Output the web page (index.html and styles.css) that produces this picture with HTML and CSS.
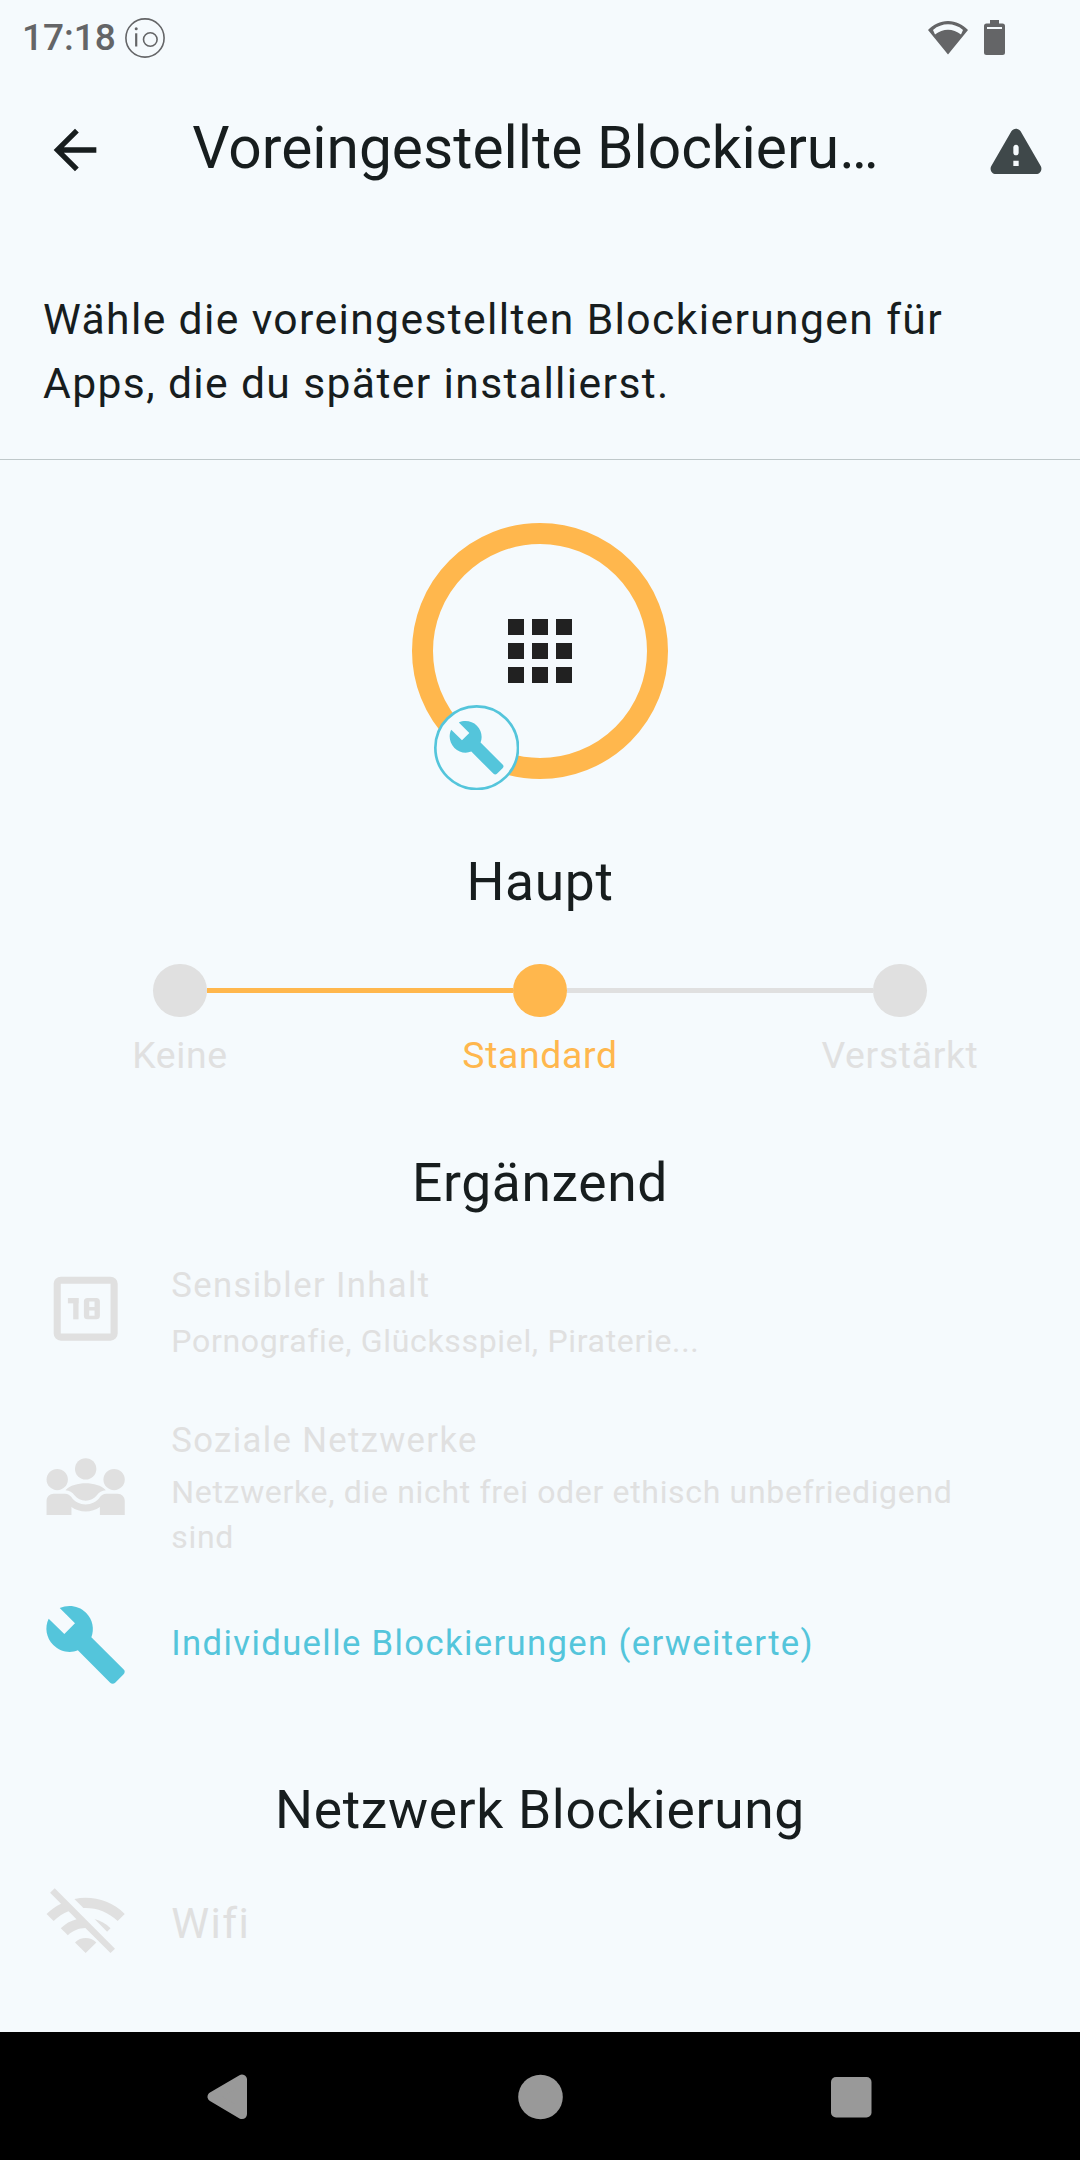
FILE: index.html
```
<!DOCTYPE html>
<html lang="de">
<head>
  <meta charset="UTF-8" />
  <title>Voreingestellte Blockierungen</title>
  <link rel="stylesheet" href="styles.css">
</head>
<body>
  <div class="status-bar">
    <span class="clock">17:18</span>
    <svg class="io" viewBox="0 0 40 40" fill="none" stroke="#646567" stroke-width="1.6">
      <circle cx="20" cy="20" r="19.1" />
      <circle cx="25.3" cy="21.5" r="6.8" />
      <path d="M11.2 15.3v13.2" stroke-width="2.2" />
      <circle cx="11.2" cy="10.8" r="1.5" fill="#646567" stroke="none" />
    </svg>
    <svg class="signal" viewBox="0 0 40 34" fill="#646567">
      <path d="M20 33.500 0 9C5.500 3.500 12 0 20 0s14.500 3.500 20 9zM7 13.500c8-6.500 18-6.500 26 0l2-4.600C26 1.500 14 1.500 5 8.900z" fill-rule="evenodd" />
    </svg>
    <svg class="battery" viewBox="0 0 21 35" fill="#646567">
      <path d="M6 0h9v3.500h3.500Q21 3.500 21 6v26.500Q21 35 18.500 35h-16Q0 35 0 32.500V6q0-2.500 2.500-2.500H6zM3 7v2h15V7z" fill-rule="evenodd" />
    </svg>
  </div>

  <header class="app-bar">
    <svg class="icon-bar" viewBox="0 0 24 24" fill="#171d1e"><path d="M20 11H7.830l5.590-5.590L12 4l-8 8 8 8 1.410-1.410L7.830 13H20v-2z" /></svg>
    <h1>Voreingestellte Blockieru…</h1>
    <svg class="icon-bar warning" viewBox="0 0 24 24" fill="#3f484a"><path d="M4.470 21h15.060c1.540 0 2.500-1.670 1.730-3L13.730 4.990c-.77-1.330-2.690-1.330-3.460 0L2.740 18c-.77 1.330.19 3 1.730 3zM12 14c-.55 0-1-.45-1-1v-2c0-.55.45-1 1-1s1 .45 1 1v2c0 .55-.45 1-1 1zm1 4h-2v-2h2v2z" /></svg>
  </header>

  <p class="intro">Wähle die voreingestellten Blockierungen für Apps, die du später installierst.</p>

  <main>
    <div class="ring">
      <svg class="apps" viewBox="0 0 24 24" fill="#212121"><path d="M4 8h4V4H4v4zm6 12h4v-4h-4v4zm-6 0h4v-4H4v4zm0-6h4v-4H4v4zm6 0h4v-4h-4v4zm6-10v4h4V4h-4zm-6 4h4V4h-4v4zm6 6h4v-4h-4v4zm0 6h4v-4h-4v4z" /></svg>
      <svg class="badge" viewBox="0 0 32 32">
        <circle cx="16" cy="16" r="15.5" fill="#f5fafd" stroke="#54c5db" />
        <path transform="translate(5 5) scale(.9167)" fill="#54c5db" d="M22.700 19l-9.100-9.100c.9-2.300.4-5-1.500-6.900-2-2-5-2.400-7.400-1.300L9 6 6 9 1.600 4.700C.4 7.100.9 10.100 2.900 12.100c1.900 1.900 4.600 2.400 6.900 1.500l9.100 9.100c.4.4 1 .4 1.400 0l2.300-2.300c.5-.4.5-1.100.1-1.400z" />
      </svg>
    </div>

    <h2 class="haupt">Haupt</h2>

    <div class="stepper">
      <span class="dot"></span>
      <span class="line active"></span>
      <span class="dot active"></span>
      <span class="line"></span>
      <span class="dot"></span>
    </div>
    <div class="labels">
      <span>Keine</span>
      <span class="active">Standard</span>
      <span>Verstärkt</span>
    </div>

    <h2 class="extra">Ergänzend</h2>

    <div class="row sensitive">
      <svg class="icon" viewBox="0 0 24 24" fill="#e0e0e0" fill-rule="evenodd">
        <path d="M5 3h14a2 2 0 0 1 2 2v14a2 2 0 0 1-2 2H5a2 2 0 0 1-2-2V5a2 2 0 0 1 2-2zm0 2v14h14V5z" />
        <rect x="7" y="9" width="3" height="1.500" />
        <rect x="8.500" y="9" width="1.500" height="6" />
        <path d="M12.500 9h2.500a1 1 0 0 1 1 1v4a1 1 0 0 1-1 1h-2.500a1 1 0 0 1-1-1v-4a1 1 0 0 1 1-1zm.5 1v1.500h1.500V10zm0 2.500V14h1.500v-1.500z" />
      </svg>
      <div class="text">
        <div class="name">Sensibler Inhalt</div>
        <div class="desc">Pornografie, Glücksspiel, Piraterie...</div>
      </div>
    </div>

    <div class="row social">
      <svg class="icon" viewBox="0 0 24 24" fill="#e0e0e0">
        <circle cx="4" cy="10" r="3" />
        <circle cx="12" cy="7" r="3" />
        <circle cx="20" cy="10" r="3" />
        <path d="M6.320 13.010C7.590 11.640 9.820 11.050 12 11.050s4.410.59 5.680 1.960c-1.100.07-1.980.6-2.530 1.400C14.420 15.400 13.240 15.950 12 15.950s-2.420-.55-3.150-1.540c-.55-.8-1.430-1.330-2.530-1.400z" />
        <path d="M1 20v-4c0-1.100.9-2 2-2h3.270c.68 0 1.310.35 1.700.94C8.890 16.250 10.390 17.050 12 17.050s3.110-.8 4.030-2.110c.39-.59 1.020-.94 1.700-.94H21c1.100 0 2 .9 2 2v4h-7v-2.260c-1.150.82-2.540 1.260-4 1.260s-2.850-.44-4-1.260V20z" />
      </svg>
      <div class="text">
        <div class="name">Soziale Netzwerke</div>
        <div class="desc">Netzwerke, die nicht frei oder ethisch unbefriedigend sind</div>
      </div>
    </div>

    <div class="row custom">
      <svg class="icon" viewBox="0 0 24 24" fill="#54c5db"><path d="M22.700 19l-9.100-9.100c.9-2.300.4-5-1.500-6.900-2-2-5-2.400-7.400-1.300L9 6 6 9 1.600 4.700C.4 7.100.9 10.100 2.900 12.100c1.900 1.900 4.600 2.400 6.900 1.500l9.100 9.100c.4.4 1 .4 1.400 0l2.300-2.300c.5-.4.5-1.100.1-1.400z" /></svg>
      <div class="name">Individuelle Blockierungen (erweiterte)</div>
    </div>

    <h2 class="network">Netzwerk Blockierung</h2>

    <div class="row wifi">
      <svg class="icon" viewBox="0 0 24 24" fill="#e0e0e0"><path d="M22.990 9C19.150 5.160 13.800 3.760 8.840 4.780l2.520 2.520c3.470-.17 6.990 1.050 9.630 3.700l2-2zm-4 4c-1.290-1.290-2.840-2.130-4.490-2.560l3.530 3.530.96-.97zM2 3.050L5.070 6.100C3.600 6.820 2.220 7.780 1 9l1.990 2c1.240-1.240 2.670-2.160 4.200-2.770l2.240 2.240C7.810 10.890 6.270 11.730 5 13v.01L6.990 15c1.360-1.360 3.140-2.040 4.920-2.060L18.980 20l1.270-1.260L3.290 1.790 2 3.050zM9 17l3 3 3-3c-1.650-1.660-4.340-1.660-6 0z" /></svg>
      <div class="wifi-name">Wifi</div>
    </div>
  </main>

  <nav class="nav-bar">
    <svg viewBox="0 0 46 46" fill="#999"><path d="M6.500 22.800 36 5.500v34.600z" stroke="#999" stroke-width="10" stroke-linejoin="round" /></svg>
    <svg viewBox="0 0 46 46" fill="#999"><circle cx="23.500" cy="23" r="22.300" /></svg>
    <svg viewBox="0 0 46 46" fill="#999"><rect x="3" y="3" width="40.500" height="40.500" rx="5" /></svg>
  </nav>
</body>
</html>
```

FILE: styles.css
```
* { box-sizing: border-box; }
body {
  margin: 0;
  width: 1080px;
  height: 2160px;
  display: flex;
  flex-direction: column;
  background: #f5fafd;
  color: #171d1e;
  font-family: Roboto, sans-serif;
  overflow: hidden;
}
svg { display: block; flex: none; }
h1, h2, p { margin: 0; font-weight: 400; }

.status-bar { height: 75px; padding: 0 75px 0 22px; display: flex; align-items: center; color: #646567; }
.clock { font-size: 37px; font-weight: 500; line-height: 75px; }
.io { width: 40px; height: 40px; margin-left: 9px; }
.signal { width: 40px; height: 34px; margin-left: auto; }
.battery { width: 21px; height: 35px; margin-left: 16px; }

.app-bar { height: 149px; padding: 0 32px 0 43px; display: flex; align-items: center; }
.app-bar h1 { margin: 0 0 2px 85.33px; font-size: 58.67px; line-height: 75px; white-space: nowrap; }
.icon-bar { width: 64px; height: 64px; }
.warning { margin-left: auto; }

.intro { height: 236px; padding: 63px 43px 0; border-bottom: 1px solid #bfc8ca; font-size: 42.67px; line-height: 64px; letter-spacing: 1.36px; }

main { flex: 1; display: flex; flex-direction: column; }
.ring { position: relative; width: 256px; height: 256px; margin: 63.33px auto 0; border: 21.33px solid #ffb74d; border-radius: 50%; display: flex; align-items: center; justify-content: center; }
.apps { width: 96px; height: 96px; }
/* sits on the lower left edge of the ring */
.badge { position: absolute; left: 0.67px; bottom: -32px; width: 85.33px; height: 85.33px; }

h2 { font-size: 53.33px; line-height: 64px; letter-spacing: 0.67px; text-align: center; }
.haupt { margin-top: 70.67px; }
.stepper { margin: 50px 153.33px 0; height: 53.33px; display: flex; align-items: center; }
.dot { width: 53.33px; height: 53.33px; border-radius: 50%; background: #e0e0e0; }
.line { flex: 1; height: 5.33px; background: #e0e0e0; }
.dot.active, .line.active { background: #ffb74d; }
.labels { display: grid; grid-template-columns: repeat(3, 360px); margin-top: 15.67px; text-align: center; font-size: 37.33px; line-height: 44px; letter-spacing: 0.67px; color: #e0e0e0; }
.labels .active { color: #ffb74d; }
.extra { margin-top: 74px; }

.row { display: flex; align-items: center; padding: 0 75px 0 43px; gap: 43px; color: #e0e0e0; }
.icon { width: 85.33px; height: 85.33px; }
.name { font-size: 34.67px; line-height: 50px; letter-spacing: 1.36px; }
.desc { margin-top: 5px; font-size: 32px; line-height: 45px; letter-spacing: 0.67px; }
.sensitive { height: 120px; margin-top: 33.33px; }
.sensitive .text { padding-top: 8px; }
.sensitive .desc { margin-top: 9px; }
.social { height: 150px; margin-top: 43px; }
.social .text { padding-top: 3px; }
.custom { height: 86px; margin-top: 40px; color: #54c5db; }
.custom .name { padding-bottom: 2px; }
.network { margin-top: 91px; }
.wifi { height: 86px; margin-top: 39px; }
.wifi-name { padding-bottom: 2px; font-size: 42.67px; letter-spacing: 1.36px; }

.nav-bar { height: 128px; padding: 1px 206px 0; display: flex; align-items: center; justify-content: space-between; background: #000; }
.nav-bar svg { width: 46px; height: 46px; }
```
